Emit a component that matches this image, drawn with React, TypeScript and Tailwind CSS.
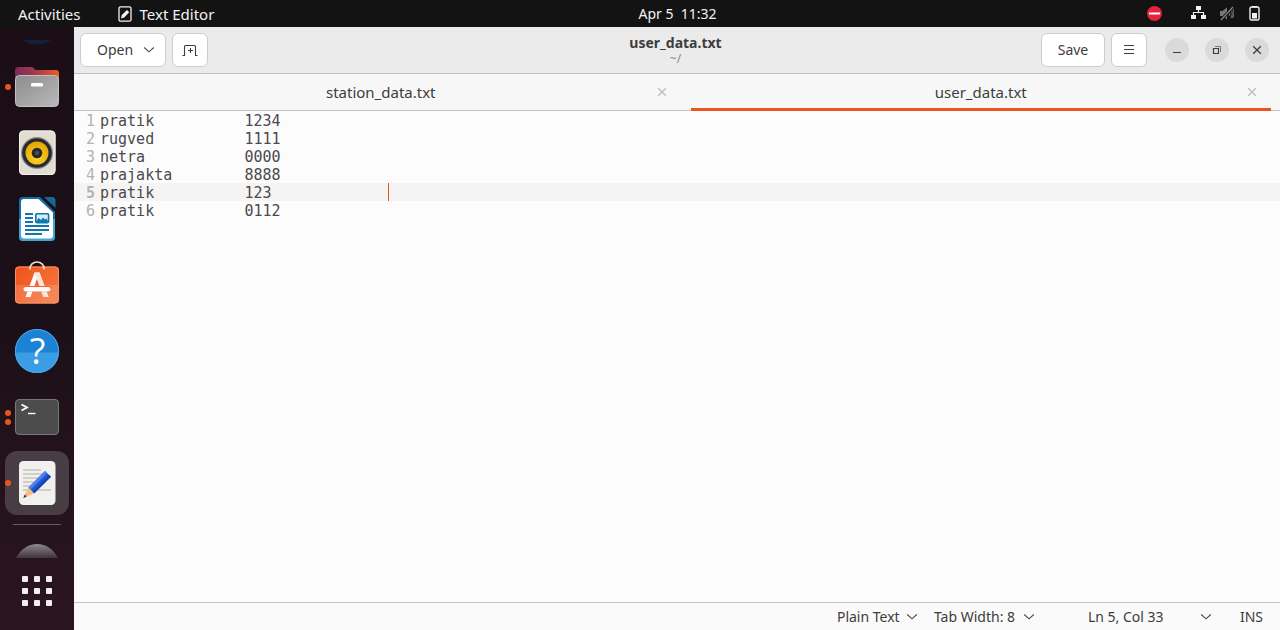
import type { ReactNode } from "react";

const fileText = [
  "pratik\t\t1234",
  "rugved\t\t1111",
  "netra\t\t0000",
  "prajakta\t8888",
  "pratik\t\t123\t\t",
  "pratik\t\t0112",
].join("\n");

const currentLine = 5;

function Chevron() {
  return (
    <svg width="12" height="12" viewBox="0 0 12 12" fill="none" stroke="#4a4a4a" strokeWidth="1.1" aria-hidden="true">
      <path d="M1.200 3.500 6 7.800 10.800 3.500" />
    </svg>
  );
}

function Cross() {
  return (
    <svg width="10" height="10" viewBox="0 0 10 10" fill="none" stroke="currentColor" strokeWidth="1.3" aria-hidden="true">
      <path d="M1.200 1.200 8.800 8.800M8.800 1.200 1.200 8.800" />
    </svg>
  );
}

function FilesIcon() {
  return (
    <svg width="48" height="48" viewBox="0 0 48 48">
      <defs>
        <linearGradient id="filesBack" x1="0" x2="1" y1="0" y2="0">
          <stop offset="0" stopColor="#7c2a5a" />
          <stop offset=".45" stopColor="#a23a4c" />
          <stop offset="1" stopColor="#ee5a24" />
        </linearGradient>
        <linearGradient id="filesFront" x1="0" x2="1" y1="0" y2="1">
          <stop offset="0" stopColor="#8c8c8c" />
          <stop offset="1" stopColor="#b9b9b9" />
        </linearGradient>
      </defs>
      <path d="M2 20V7.500q0-3.500 3.500-3.500H18q2 0 3 1.400L22.500 7H43q3 0 3 3v12H2Z" fill="url(#filesBack)" />
      <rect x="2.500" y="12.500" width="43" height="31" rx="4" fill="url(#filesFront)" stroke="#c4c0c0" strokeWidth="1" />
      <rect x="18" y="20" width="12" height="3.500" rx="1.200" fill="#fff" />
    </svg>
  );
}

function MusicIcon() {
  return (
    <svg width="48" height="48" viewBox="0 0 48 48">
      <defs>
        <radialGradient id="cone" cx=".5" cy=".7" r=".7">
          <stop offset="0" stopColor="#ffd42b" />
          <stop offset="1" stopColor="#e3a500" />
        </radialGradient>
      </defs>
      <rect x="6" y="1.500" width="36.500" height="44.500" rx="4.500" fill="#e2ddd2" />
      <rect x="6.500" y="2" width="35.500" height="43.500" rx="4" fill="none" stroke="#f4f1ea" />
      <circle cx="24" cy="24" r="16" fill="#8f8f8d" />
      <circle cx="24" cy="24" r="14.800" fill="#282a32" />
      <circle cx="24" cy="24" r="11.500" fill="url(#cone)" />
      <circle cx="24" cy="24" r="5.300" fill="#25272b" />
      <circle cx="24" cy="24" r="2.200" fill="#4c4e54" />
    </svg>
  );
}

function WriterIcon() {
  return (
    <svg width="48" height="48" viewBox="0 0 48 48">
      <path d="M10 2H27L42 17V42q0 4-4 4H10q-4 0-4-4V6q0-4 4-4Z" fill="#106fa5" />
      <path d="M6 24H42V42q0 4-4 4H10q-4 0-4-4Z" fill="#43a4d6" />
      <path d="M11 4H25.500L40 17.500V40.500q0 3-3 3H11q-3 0-3-3V7q0-3 3-3Z" fill="#fff" />
      <path d="M31 2h8q3.500 0 3.500 3.500V13Z" fill="#14699b" />
      <path d="M12 19h8M12 23h8M12 27h8M12 31h24M12 35h24M12 39h17" stroke="#0e77ad" strokeWidth="2" />
      <rect x="22.800" y="18.800" width="12.800" height="8.800" rx="1" fill="#d1effc" stroke="#0e77ad" strokeWidth="1.600" />
      <path d="m23 27 2.500-4 2.500 2 2-2.500 2 2 1.500-1 2 3.500Z" fill="#0e77ad" />
    </svg>
  );
}

function SoftwareIcon() {
  return (
    <svg width="48" height="48" viewBox="0 0 48 48">
      <defs>
        <linearGradient id="bag" x1="0" x2="1" y1="0" y2=".5">
          <stop offset="0" stopColor="#f0511d" />
          <stop offset="1" stopColor="#f4743b" />
        </linearGradient>
      </defs>
      <rect x="2" y="5.500" width="44" height="37" rx="4" fill="url(#bag)" />
      <path d="M2 24H46V38.500q0 4-4 4H6q-4 0-4-4Z" fill="#fff" opacity=".14" />
      <rect x="2.500" y="6" width="43" height="36" rx="3.500" fill="none" stroke="#f69468" />
      <path d="M17 8.500V7.500a7 6.500 0 0 1 14 0V8.500" fill="none" stroke="#f6e3b4" strokeWidth="1.700" />
      <path d="M21.500 11.500h5L35.500 36H30.500L24 17.500 17.500 36H12.500Z" fill="#fff" />
      <path d="M21.500 11.500h5L35.500 36H30.500Z" fill="#fbe5da" />
      <rect x="10" y="25" width="28" height="5.500" rx="2.750" fill="#f0622d" />
      <rect x="10.500" y="26" width="27" height="4.500" rx="2.250" fill="#fff" />
    </svg>
  );
}

function HelpIcon() {
  return (
    <svg width="48" height="48" viewBox="0 0 48 48">
      <circle cx="24" cy="24" r="22" fill="#1c82d6" />
      <path d="M2 25.500H46a22 20.500 0 0 1-44 0Z" fill="#3b9de3" />
      <circle cx="24" cy="24" r="21.500" fill="none" stroke="#4ea8e7" />
      <text x="24.500" y="37" textAnchor="middle" fill="#fff" className="font-['Open_Sans',sans-serif] text-[36px]">?</text>
    </svg>
  );
}

function TerminalIcon() {
  return (
    <svg width="48" height="48" viewBox="0 0 48 48">
      <rect x="2.500" y="6.500" width="43" height="35" rx="3.500" fill="#4c4c4c" stroke="#777" />
      <path d="m8.500 11.500 5.500 3-5.500 3" fill="none" stroke="#fff" strokeWidth="1.800" />
      <path d="M15 20.500h7.500" stroke="#fff" strokeWidth="1.400" />
    </svg>
  );
}

function EditorIcon() {
  return (
    <svg width="48" height="48" viewBox="0 0 48 48">
      <rect x="6" y="2" width="36.500" height="44" rx="4.500" fill="#f0f0ef" />
      <path d="M10 11h18M10 15h20M10 19h18M10 23h14M10 27h15M10 31h28" stroke="#c7c3b6" strokeWidth="1.600" />
      <path d="m15.500 28.500 5.800 5.800-11 4.700Z" fill="#f7bd79" />
      <path d="m11.800 35.500 2 2-3.600 1.700Z" fill="#3c3c3c" />
      <path d="M15.500 28.500 32 12 38 17.800 21.300 34.300Z" fill="#2458d3" />
      <path d="M15.500 28.500 32 12 34 14 17.500 30.500Z" fill="#4c82f5" />
      <path d="M19.500 32.500 36 16 38 17.800 21.300 34.300Z" fill="#1743ae" />
    </svg>
  );
}

const dockItems: { name: string; icon: ReactNode; windows: number; active?: boolean }[] = [
  { name: "Files", icon: <FilesIcon />, windows: 1 },
  { name: "Rhythmbox", icon: <MusicIcon />, windows: 0 },
  { name: "LibreOffice Writer", icon: <WriterIcon />, windows: 0 },
  { name: "Ubuntu Software", icon: <SoftwareIcon />, windows: 0 },
  { name: "Help", icon: <HelpIcon />, windows: 0 },
  { name: "Terminal", icon: <TerminalIcon />, windows: 2 },
  { name: "Text Editor", icon: <EditorIcon />, windows: 1, active: true },
];

function TopBar() {
  return (
    <header className="grid h-[27px] shrink-0 grid-cols-[1fr_auto_1fr] items-center bg-[#131313] px-[18px] text-[14px] text-[#f2f2f2]">
      <div className="flex items-center gap-[37px] text-[15px]">
        <button type="button">Activities</button>
        <button type="button" className="flex items-center gap-2">
          <svg width="14" height="16" viewBox="0 0 14 16" aria-hidden="true">
            <rect x="1" y=".8" width="12" height="14.400" rx="1.500" fill="none" stroke="#f2f2f2" strokeWidth="1.300" />
            <path d="M3 12.500 3.800 9 9 4l2.200 2.200L6.300 11.500Z" fill="#f2f2f2" />
          </svg>
          Text Editor
        </button>
      </div>
      <button type="button" className="whitespace-pre pl-[75px]">Apr 5  11:32</button>
      <div className="flex items-center justify-end">
        <svg className="mr-7" width="16" height="16" viewBox="0 0 16 16" aria-label="Do not disturb">
          <circle cx="8.500" cy="7.500" r="7.500" fill="#e5233d" />
          <path d="M3 7.500h11" stroke="#fff" strokeWidth="2" />
        </svg>
        <svg className="mr-3" width="16" height="16" viewBox="0 0 16 16" aria-label="Wired network" fill="#f2f2f2">
          <path d="M6 0h5v4h-5zM1 9h5v4h-5zM11 9h5v4h-5z" />
          <path d="M8.500 3v3.500M3.500 9V6.500h10V9" fill="none" stroke="#f2f2f2" strokeWidth="1.200" />
        </svg>
        <svg className="mr-3" width="16" height="16" viewBox="0 0 16 16" aria-label="Muted">
          <path d="M2 5h2.500L9 1.500v12L4.500 10H2Z" fill="#777" />
          <path d="M11 5q1.500 2.500 0 5M13 3q2.500 4.500 0 9M15 2q2 5.500-.5 10" fill="none" stroke="#6b6b6b" strokeWidth="1.200" />
          <path d="M15 1 3 14" stroke="#131313" strokeWidth="3" />
          <path d="M15 1 3 14" stroke="#858585" strokeWidth="1.300" />
        </svg>
        <svg width="16" height="16" viewBox="0 0 16 16" aria-label="Battery">
          <rect x="4" y="1" width="9" height="13" rx="1.500" fill="none" stroke="#f2f2f2" strokeWidth="1.400" />
          <path d="M6 0h5V1.500H6zM6 7h5v5.500h-5z" fill="#f2f2f2" />
        </svg>
      </div>
    </header>
  );
}

function Dock() {
  return (
    <nav aria-label="Dock" className="flex w-[74px] shrink-0 flex-col items-center bg-linear-to-b from-[#1b0e16] via-[#1c1018] to-[#2b1520]">
      <div className="flex h-[27px] shrink-0 items-start pt-3">
        <svg width="30" height="8" viewBox="0 0 30 8" aria-hidden="true">
          <path d="M1 1h28q-6 4.500-14 4.500T1 1Z" fill="#13203c" />
        </svg>
      </div>
      {dockItems.map((item) => (
        <button key={item.name} type="button" aria-label={item.name} className="relative flex h-[66px] w-full shrink-0 items-center justify-center">
          <span className={item.active ? "flex size-16 items-center justify-center rounded-xl bg-[#483d43]" : "flex size-16 items-center justify-center"}>
            {item.icon}
          </span>
          <span className="absolute inset-y-0 left-[5px] flex flex-col justify-center gap-[3px]">
            {Array.from({ length: item.windows }, (_, i) => (
              <span key={i} className="size-[6px] rounded-full bg-[#e95420]" />
            ))}
          </span>
        </button>
      ))}
      <div className="mt-2 h-px w-12 shrink-0 bg-[#655a60]" />
      <svg className="mt-[18px] shrink-0" width="42" height="16" viewBox="0 0 42 16" aria-hidden="true">
        <defs>
          <linearGradient id="fade" x1="0" x2="0" y1="0" y2="1">
            <stop offset="0" stopColor="#8f888c" />
            <stop offset="1" stopColor="#40333a" />
          </linearGradient>
        </defs>
        <path d="M0 15C5 6 12 1 21 1s16 5 21 14Z" fill="url(#fade)" />
      </svg>
      <button type="button" aria-label="Show Applications" className="mt-[17px] grid shrink-0 grid-cols-3 gap-[6px]">
        {Array.from({ length: 9 }, (_, i) => (
          <span key={i} className="size-[6px] rounded-[1px] bg-[#f2efee]" />
        ))}
      </button>
    </nav>
  );
}

const headerButton = "flex h-[34px] items-center justify-center rounded-md border border-[#cdcdcd] bg-white";
const windowButton = "flex size-6 items-center justify-center rounded-full bg-[#dadada]";

function HeaderBar() {
  return (
    <div className="grid h-[47px] shrink-0 grid-cols-[1fr_auto_1fr] items-center border-b border-[#bfbfbf] bg-[#ebebeb] pr-[11px] pl-2">
      <div className="-ml-[2px] flex gap-[6px]">
        <button type="button" className={`${headerButton} gap-[10px] pr-[10px] pl-4`}>
          Open
          <Chevron />
        </button>
        <button type="button" aria-label="New tab" className={`${headerButton} w-9`}>
          <svg width="16" height="16" viewBox="0 0 16 16" fill="none" stroke="#3d3d3d" strokeWidth="1.100" aria-hidden="true">
            <path d="M.500 13.500h2V4.500q0-1 1-1h9q1 0 1 1v9h2M8.500 6v5M6 8.500h5" />
          </svg>
        </button>
      </div>
      <div className="flex flex-col items-center">
        <h1 className="text-[14px] leading-[18px] font-bold">user_data.txt</h1>
        <p className="text-[12px] leading-[14px] text-[#8a8a8a]">~/</p>
      </div>
      <div className="flex items-center justify-end gap-4">
        <div className="flex gap-[6px]">
          <button type="button" className={`${headerButton} w-16`}>Save</button>
          <button type="button" aria-label="Menu" className={`${headerButton} w-9`}>
            <svg width="12" height="12" viewBox="0 0 12 12" stroke="#3d3d3d" aria-hidden="true">
              <path d="M1 1.500h10M1 5.500h10M1 9.500h10" />
            </svg>
          </button>
        </div>
        <button type="button" aria-label="Minimize" className={`${windowButton} ml-[2px]`}>
          <svg width="10" height="10" viewBox="0 0 10 10" stroke="#3d3d3d" aria-hidden="true"><path d="M1 7.500h8" /></svg>
        </button>
        <button type="button" aria-label="Restore" className={windowButton}>
          <svg width="10" height="10" viewBox="0 0 10 10" fill="none" stroke="#3d3d3d" aria-hidden="true">
            <path d="M1.500 3.500h5v5h-5Z" strokeWidth="1.200" />
            <path d="M3 1.500h5.500V7" stroke="#777" />
          </svg>
        </button>
        <button type="button" aria-label="Close" className={windowButton}><Cross /></button>
      </div>
    </div>
  );
}

function Tabs() {
  return (
    <div role="tablist" className="grid h-[37px] shrink-0 grid-cols-2 border-b border-[#c4c4c4] bg-[#f7f7f7] pl-[7px] text-[15px]">
      <div className="grid grid-cols-[1fr_auto_1fr] items-center px-[14px]">
        <button type="button" role="tab" aria-selected="false" className="col-start-2">station_data.txt</button>
        <button type="button" aria-label="Close station_data.txt" className="justify-self-end text-[#bdbdbd]"><Cross /></button>
      </div>
      <div className="flex pr-[9px] pl-[10px]">
        <div className="-mb-px grid flex-1 grid-cols-[1fr_auto_1fr] items-center border-b-3 border-[#e95420] px-[14px] pt-[2px]">
          <button type="button" role="tab" aria-selected="true" className="col-start-2">user_data.txt</button>
          <button type="button" aria-label="Close user_data.txt" className="justify-self-end text-[#bdbdbd]"><Cross /></button>
        </div>
      </div>
    </div>
  );
}

function Editor() {
  return (
    <main className="relative flex flex-1 bg-[#fcfcfc] pt-[1px] font-['DejaVu_Sans_Mono',monospace] text-[15px] leading-[18px]">
      <div className="absolute inset-x-0 top-[72px] h-[18px] bg-[#f5f4f3]" />
      <div aria-hidden="true" className="relative w-[26px] shrink-0 pr-[5px] text-right text-[#b3b3b3]">
        {[1, 2, 3, 4, 5, 6].map((n) => (
          <div key={n} className={n === currentLine ? "font-bold" : ""}>{n}</div>
        ))}
      </div>
      <textarea
        aria-label="user_data.txt"
        wrap="off"
        spellCheck={false}
        defaultValue={fileText}
        className="relative flex-1 resize-none overflow-auto bg-transparent text-[#4a4a4d] caret-[#e95420] outline-none [tab-size:8]"
      />
      <div className="absolute top-[72px] left-[314px] h-[18px] w-px bg-[#e95420]" />
    </main>
  );
}

function StatusBar() {
  return (
    <footer className="flex h-7 shrink-0 items-center justify-end border-t border-[#c4c4c4] bg-[#fafafa] pr-[17px]">
      <label className="relative mr-4 flex items-center">
        <span className="sr-only">Language</span>
        <select className="h-[26px] w-[81px] appearance-none bg-transparent leading-[26px] outline-none">
          <option>Plain Text</option>
        </select>
        <span className="pointer-events-none absolute right-0"><Chevron /></span>
      </label>
      <label className="relative flex items-center">
        <span className="sr-only">Tab width</span>
        <select className="h-[26px] w-[101px] appearance-none bg-transparent leading-[26px] outline-none">
          <option>Tab Width: 8</option>
        </select>
        <span className="pointer-events-none absolute right-0"><Chevron /></span>
      </label>
      <button type="button" className="ml-[53px] flex w-[124px] items-center justify-between">
        Ln 5, Col 33
        <Chevron />
      </button>
      <span className="ml-7">INS</span>
    </footer>
  );
}

export default function App() {
  return (
    <div className="flex h-screen flex-col overflow-hidden font-['Noto_Sans',sans-serif] text-[14px] leading-5 text-[#3d3d3d]">
      <TopBar />
      <div className="flex min-h-0 flex-1">
        <Dock />
        <section aria-label="Text Editor" className="flex min-w-0 flex-1 flex-col">
          <HeaderBar />
          <Tabs />
          <Editor />
          <StatusBar />
        </section>
      </div>
    </div>
  );
}
